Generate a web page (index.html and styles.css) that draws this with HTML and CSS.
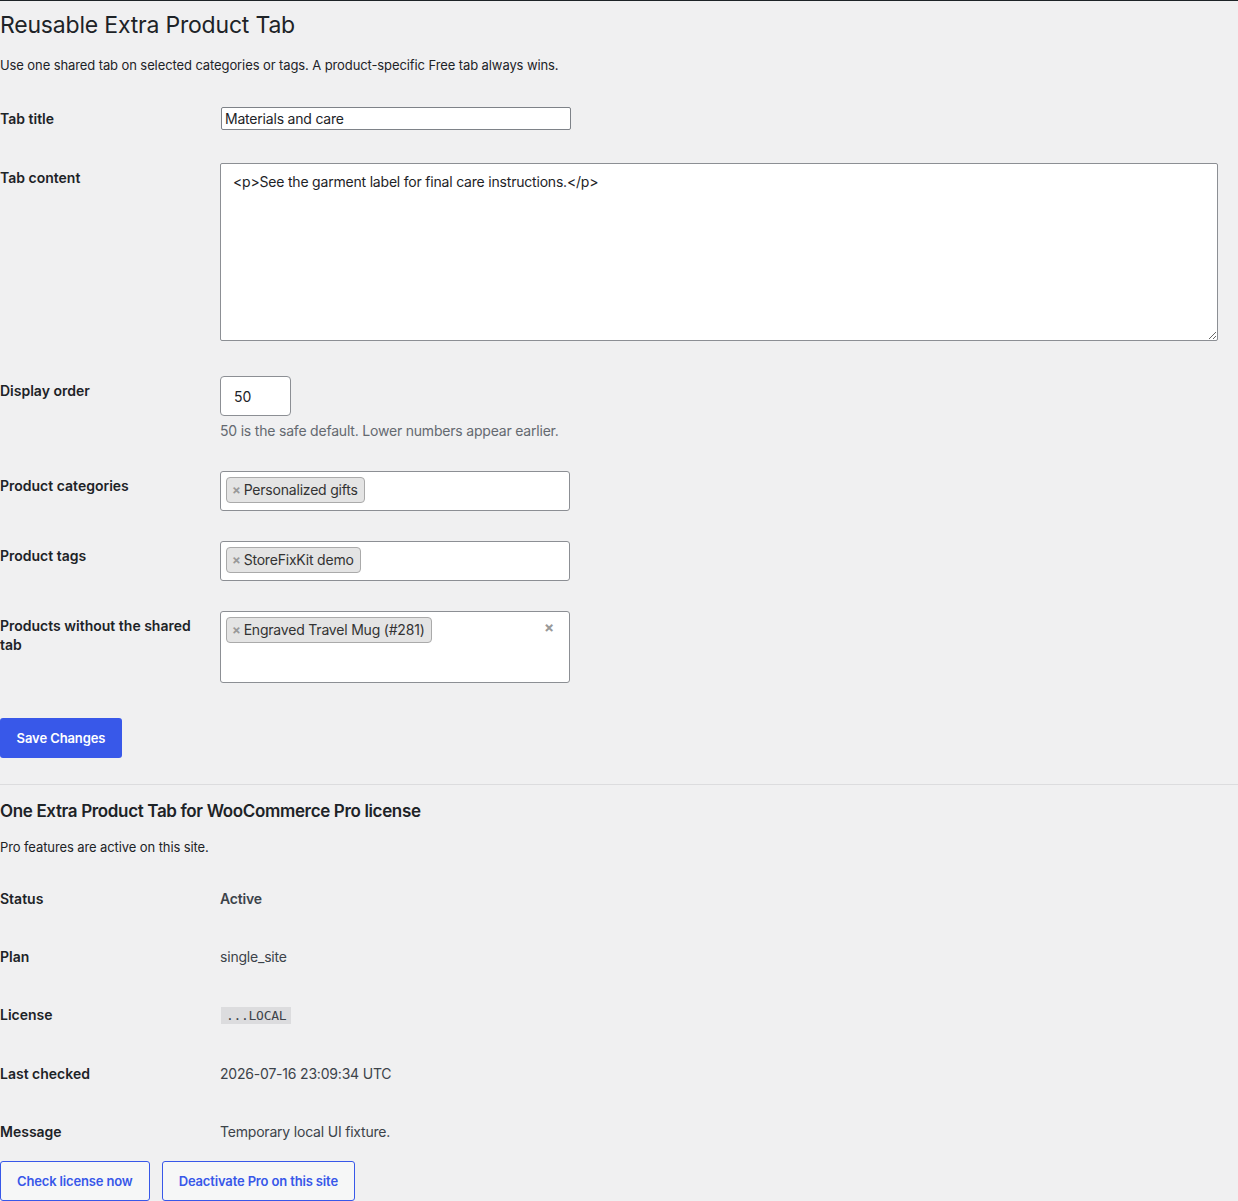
FILE: index.html
```html
<!DOCTYPE html>
<html lang="en">
<head>
    <meta charset="UTF-8">
    <meta name="viewport" content="width=device-width, initial-scale=1.0">
    <title>Reusable Extra Product Tab</title>
    <link rel="stylesheet" href="styles.css">
</head>
<body>
<div class="wrap">
    <h1 class="page-title">Reusable Extra Product Tab</h1>
    <p class="intro">Use one shared tab on selected categories or tags. A product-specific Free tab always wins.</p>

    <form class="settings">
        <div class="field-row row-title">
            <label class="field-label" for="tab-title">Tab title</label>
            <div class="field">
                <input type="text" id="tab-title" class="text-input" value="Materials and care">
            </div>
        </div>

        <div class="field-row row-content">
            <label class="field-label" for="tab-content">Tab content</label>
            <div class="field">
                <textarea id="tab-content" class="content-area">&lt;p&gt;See the garment label for final care instructions.&lt;/p&gt;</textarea>
            </div>
        </div>

        <div class="field-row">
            <label class="field-label" for="tab-order">Display order</label>
            <div class="field">
                <input type="text" id="tab-order" class="number-input" value="50">
                <p class="description">50 is the safe default. Lower numbers appear earlier.</p>
            </div>
        </div>

        <div class="field-row">
            <label class="field-label">Product categories</label>
            <div class="field">
                <div class="select-box">
                    <span class="chip"><span class="chip-x">×</span>Personalized gifts</span>
                </div>
            </div>
        </div>

        <div class="field-row">
            <label class="field-label">Product tags</label>
            <div class="field">
                <div class="select-box">
                    <span class="chip"><span class="chip-x">×</span>StoreFixKit demo</span>
                </div>
            </div>
        </div>

        <div class="field-row row-last">
            <label class="field-label">Products without the shared tab</label>
            <div class="field">
                <div class="select-box select-tall">
                    <span class="chip"><span class="chip-x">×</span>Engraved Travel Mug (#281)</span>
                    <span class="clear-x">×</span>
                </div>
            </div>
        </div>

        <button type="button" class="btn-primary">Save Changes</button>
    </form>

    <hr class="divider">

    <h2 class="section-title">One Extra Product Tab for WooCommerce Pro license</h2>
    <p class="section-note">Pro features are active on this site.</p>

    <div class="license-table">
        <div class="license-row">
            <div class="license-label">Status</div>
            <div class="license-value strong">Active</div>
        </div>
        <div class="license-row">
            <div class="license-label">Plan</div>
            <div class="license-value">single_site</div>
        </div>
        <div class="license-row">
            <div class="license-label">License</div>
            <div class="license-value"><code>...LOCAL</code></div>
        </div>
        <div class="license-row">
            <div class="license-label">Last checked</div>
            <div class="license-value">2026-07-16 23:09:34 UTC</div>
        </div>
        <div class="license-row">
            <div class="license-label">Message</div>
            <div class="license-value">Temporary local UI fixture.</div>
        </div>
    </div>

    <div class="license-actions">
        <button type="button" class="btn-secondary">Check license now</button>
        <button type="button" class="btn-secondary">Deactivate Pro on this site</button>
    </div>
</div>
</body>
</html>
```

FILE: styles.css
```css
body {
    margin: 0;
    background-color: #f0f0f1;
    border-top: 1px solid #1d2327;
    color: #1d2327;
    font-family: Inter, "Noto Sans", sans-serif;
    font-size: 13px;
    line-height: 20px;
    letter-spacing: -0.1px;
}
.wrap {
    padding: 0;
}
.page-title {
    margin: 9px 0 0;
    font-size: 23px;
    font-weight: 400;
    line-height: 30px;
    letter-spacing: -0.2px;
}
.intro {
    margin: 15px 0 0;
}

/* settings form */
.settings {
    margin-top: 32px;
    padding-right: 20px;
}
.field-row {
    display: grid;
    grid-template-columns: 220px 1fr;
    margin-bottom: 30px;
}
.row-title {
    margin-bottom: 33px;
}
.row-content {
    margin-bottom: 35px;
}
.row-last {
    margin-bottom: 35px;
}
.field-label {
    width: 200px;
    padding-top: 5px;
    font-size: 14px;
    font-weight: 600;
    line-height: 19px;
    letter-spacing: 0;
}
.row-title .field-label {
    padding-top: 2px;
}
.text-input {
    box-sizing: border-box;
    width: 350px;
    height: 23px;
    margin: 0 0 0 1px;
    padding: 0 3px;
    border: 1px solid #7e8288;
    border-radius: 2px;
    background: #fff;
    font-family: inherit;
    font-size: 14px;
    letter-spacing: -0.2px;
    color: #1d2327;
}
.content-area {
    display: block;
    box-sizing: border-box;
    width: 100%;
    height: 178px;
    margin: 0;
    padding: 8px 12px;
    border: 1px solid #8c8f94;
    border-radius: 2px;
    background: #fff;
    font-family: inherit;
    font-size: 14px;
    line-height: 20px;
    letter-spacing: -0.2px;
    color: #1d2327;
}
.number-input {
    display: block;
    box-sizing: border-box;
    width: 71px;
    height: 40px;
    margin: 0;
    padding: 0 13px;
    border: 1px solid #8c8f94;
    border-radius: 4px;
    background: #fff;
    font-family: inherit;
    font-size: 14px;
    color: #1d2327;
}
.description {
    margin: 5px 0 0;
    font-size: 14px;
    letter-spacing: -0.2px;
    color: #646970;
}
.select-box {
    position: relative;
    box-sizing: border-box;
    width: 350px;
    height: 40px;
    padding: 5px;
    border: 1px solid #8c8f94;
    border-radius: 3px;
    background: #fff;
}
.select-tall {
    height: 72px;
}
.chip {
    display: inline-flex;
    align-items: center;
    box-sizing: border-box;
    height: 26px;
    padding: 0 6px 0 5px;
    border: 1px solid #aaa;
    border-radius: 4px;
    background: #e4e4e4;
    font-size: 14px;
    letter-spacing: -0.2px;
    color: #333;
}
.chip-x {
    margin-right: 3px;
    font-size: 13px;
    font-weight: 700;
    color: #999;
}
.clear-x {
    position: absolute;
    top: 6px;
    right: 15px;
    font-size: 15px;
    font-weight: 700;
    color: #999;
}
.btn-primary {
    display: block;
    width: 122px;
    height: 40px;
    padding: 0;
    border: none;
    border-radius: 3px;
    background: #3858e9;
    color: #fff;
    font-family: inherit;
    font-size: 13px;
    font-weight: 600;
    letter-spacing: -0.1px;
    cursor: pointer;
}
.divider {
    margin: 26px 0 0;
    border: none;
    border-top: 1px solid #dcdcde;
}

/* license section */
.section-title {
    margin: 15px 0 0;
    font-size: 17px;
    font-weight: 600;
    line-height: 22px;
    letter-spacing: -0.35px;
}
.section-note {
    margin: 15px 0 0;
}
.license-table {
    margin-top: 32px;
}
.license-row {
    display: grid;
    grid-template-columns: 220px 1fr;
    margin-bottom: 38px;
    font-size: 14px;
    letter-spacing: -0.2px;
}
.license-row:last-child {
    margin-bottom: 0;
}
.license-label {
    font-weight: 600;
    letter-spacing: 0;
}
.license-value {
    color: #3c434a;
}
.license-value.strong {
    font-weight: 600;
}
code {
    margin-left: 1px;
    padding: 1px 5px;
    background: #dcdcde;
    font-family: "DejaVu Sans Mono", monospace;
    font-size: 13px;
    letter-spacing: -0.3px;
    color: #3c434a;
}
.license-actions {
    display: flex;
    gap: 12px;
    margin-top: 19px;
}
.btn-secondary {
    height: 40px;
    padding: 0 16px;
    border: 1px solid #3858e9;
    border-radius: 3px;
    background: #f6f7f7;
    color: #3858e9;
    font-family: inherit;
    font-size: 13px;
    font-weight: 600;
    letter-spacing: -0.15px;
    cursor: pointer;
}
```
